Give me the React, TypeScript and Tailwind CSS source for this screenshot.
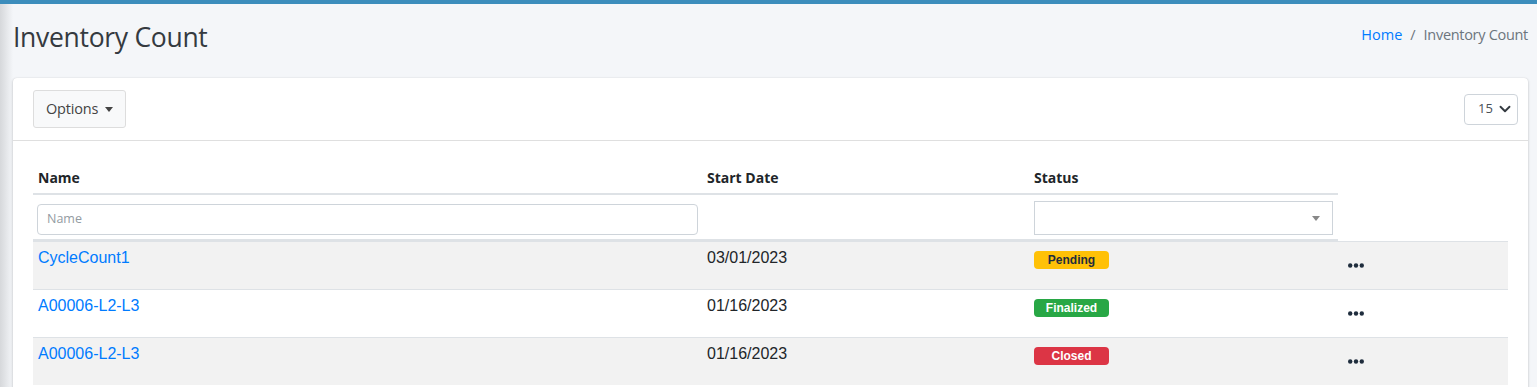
import { ChevronDown } from "lucide-react";

const ROWS = [
  { name: "CycleCount1", date: "03/01/2023", status: "Pending" },
  { name: "A00006-L2-L3", date: "01/16/2023", status: "Finalized" },
  { name: "A00006-L2-L3", date: "01/16/2023", status: "Closed" },
];

const BADGE: Record<string, string> = {
  Pending: "bg-[#ffc107] text-[#1f2d3d]",
  Finalized: "bg-[#28a745] text-white",
  Closed: "bg-[#dc3545] text-white",
};

const COLS = "grid grid-cols-[669px_327px_309px_170px]";

function Dots() {
  return (
    <svg width="16" height="5" viewBox="0 0 16 5" className="text-[#1f2d3d]">
      <circle cx="2.2" cy="2.5" r="2.2" fill="currentColor" />
      <circle cx="8" cy="2.5" r="2.2" fill="currentColor" />
      <circle cx="13.8" cy="2.5" r="2.2" fill="currentColor" />
    </svg>
  );
}

export default function App() {
  return (
    <div className="h-[387px] w-full overflow-hidden bg-[#f4f6f9] border-t-4 border-[#3c8dbc] font-['Open_Sans',sans-serif] text-[#212529]">
      <div className="flex h-full">
        <div className="w-[13px] shrink-0 bg-gradient-to-r from-[#d6d8db] to-[#f4f6f9]" />
        <div className="flex-1 pr-[9px]">
          {/* header */}
          <div className="flex items-center justify-between h-[74px] pb-[6px]">
            <h1 className="text-[26.5px] leading-[34px] text-[#343a40] tracking-[-0.3px] -mt-[3px]">
              Inventory Count
            </h1>
            <div className="flex items-center gap-[8px] text-[14.5px] -mt-[6px]">
              <span className="text-[#007bff]">Home</span>
              <span className="text-[#6c757d]">/</span>
              <span className="text-[#6c757d] tracking-[-0.3px]">Inventory Count</span>
            </div>
          </div>

          {/* card */}
          <div className="bg-white rounded-[4px] shadow-[0_0_1px_rgba(0,0,0,0.125),0_1px_3px_rgba(0,0,0,0.2)]">
            <div className="flex items-center justify-between h-[63px] pl-[20px] pr-[10px] border-b border-[rgba(0,0,0,0.125)]">
              <button className="flex items-center gap-[7px] h-[38px] px-[12px] bg-[#f8f9fa] border border-[#ddd] rounded-[3px] text-[14.5px] text-[#444] tracking-[-0.2px]">
                Options
                <span className="w-0 h-0 border-l-[4px] border-r-[4px] border-t-[5px] border-l-transparent border-r-transparent border-t-[#444]" />
              </button>
              <div className="flex items-center justify-between w-[54px] h-[31px] border border-[#ced4da] rounded-[4px] pl-[13px] pr-[3px] text-[13px] text-[#495057]">
                <span>15</span>
                <ChevronDown size={18} strokeWidth={2.5} className="text-[#343a40]" />
              </div>
            </div>

            <div className="px-[20px] pt-[20px] pb-[20px]">
              <div className={`${COLS} h-[34px] items-center text-[14px] font-bold text-[#212529]`}>
                <div className="h-full flex items-center px-[5px] border-b-2 border-[#dee2e6]">Name</div>
                <div className="h-full flex items-center px-[5px] border-b-2 border-[#dee2e6]">Start Date</div>
                <div className="h-full flex items-center px-[5px] border-b-2 border-[#dee2e6]">Status</div>
                <div />
              </div>
              <div className={`${COLS} h-[46px]`}>
                <div className="pt-[9px] px-[4px] border-b-2 border-[#dee2e6]">
                  <div className="w-full h-[31px] border border-[#ced4da] rounded-[4px] flex items-center px-[9px] text-[12.5px] text-[#939ba2]">
                    Name
                  </div>
                </div>
                <div className="border-b-2 border-[#dee2e6]" />
                <div className="pt-[6px] px-[5px] border-b-2 border-[#dee2e6]">
                  <div className="w-full h-[34px] border border-[#ced4da] flex items-center justify-end pr-[12px]">
                    <span className="w-0 h-0 border-l-[4px] border-r-[4px] border-t-[5px] border-l-transparent border-r-transparent border-t-[#888]" />
                  </div>
                </div>
                <div />
              </div>
              {ROWS.map((r, i) => (
                <div
                  key={i}
                  className={`${COLS} h-[48px] border-t border-[#dee2e6] ${i % 2 === 0 ? "bg-[#f2f2f2]" : "bg-white"} font-['Liberation_Sans',Arial,sans-serif] text-[16px]`}
                >
                  <div className="px-[5px] pt-[4px] text-[#007bff]">{r.name}</div>
                  <div className="px-[5px] pt-[4px] text-[#212529]">{r.date}</div>
                  <div className="px-[5px] pt-[9px]">
                    <span className={`flex items-center justify-center w-[75px] h-[18px] rounded-[4px] text-[12px] font-bold ${BADGE[r.status]}`}>
                      {r.status}
                    </span>
                  </div>
                  <div className="flex items-center px-[10px]">
                    <Dots />
                  </div>
                </div>
              ))}
            </div>
          </div>
        </div>
      </div>
    </div>
  );
}
